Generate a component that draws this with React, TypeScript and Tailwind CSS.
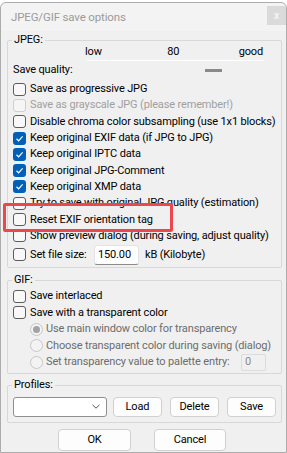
import React from 'react';

type CheckProps = { label: string; checked?: boolean; disabled?: boolean };

function Box({ checked, disabled }: { checked?: boolean; disabled?: boolean }) {
  if (checked) {
    return (
      <span className="flex h-[13px] w-[13px] shrink-0 items-center justify-center rounded-[3px] bg-[#005fb8]">
        <svg width="9" height="9" viewBox="0 0 9 9">
          <path d="M1.5 4.8 L3.6 6.8 L7.6 2.4" fill="none" stroke="#fff" strokeWidth="1.2" />
        </svg>
      </span>
    );
  }
  return (
    <span
      className={`h-[13px] w-[13px] shrink-0 rounded-[3px] border ${
        disabled ? 'border-[#cfcfcf] bg-[#f5f5f5]' : 'border-[#5c5c5c] bg-[#f8f8f8]'
      }`}
    />
  );
}

function Check({ label, checked, disabled }: CheckProps) {
  return (
    <div className="flex h-[16.3px] items-center pl-[5px]">
      <Box checked={checked} disabled={disabled} />
      <span className={`ml-[4px] whitespace-nowrap ${disabled ? 'text-[#a0a0a0]' : 'text-black'}`}>{label}</span>
    </div>
  );
}

function Radio({ label, selected, children }: { label: string; selected?: boolean; children?: React.ReactNode }) {
  return (
    <div className="flex h-[16.5px] items-center pl-[22px]">
      <span className="flex h-[13px] w-[13px] shrink-0 items-center justify-center rounded-full border border-[#c6c6c6] bg-[#f3f3f3]">
        {selected && <span className="h-[7px] w-[7px] rounded-full bg-[#a3a3a3]" />}
      </span>
      <span className="ml-[3px] whitespace-nowrap text-[#6d6d6d]">{label}</span>
      {children}
    </div>
  );
}

function Group({ label, className, children }: { label: string; className: string; children: React.ReactNode }) {
  return (
    <div className={`relative rounded-[2px] border border-[#d8d8d8] ${className}`}>
      <span className="absolute left-[4px] top-[-8px] bg-[#f0f0f0] px-[2px] leading-[14px] text-black">{label}</span>
      {children}
    </div>
  );
}

function Button({ label, className }: { label: string; className: string }) {
  return (
    <div
      className={`flex items-center justify-center rounded-[4px] border border-[#d0d0d0] bg-[#fdfdfd] text-black ${className}`}
    >
      {label}
    </div>
  );
}

export default function App() {
  return (
    <div className="relative h-[453px] w-[287px] overflow-hidden bg-white font-['Roboto',sans-serif] text-[11px] leading-[14px] tracking-[-0.15px]">
      <div className="mt-[2px] flex h-[451px] flex-col rounded-t-[6px] border border-[#acacac] bg-[#f0f0f0]">
        {/* Title bar */}
        <div className="flex h-[28px] items-center rounded-t-[6px] bg-[#f3f3f3] pl-[10px]">
          <span className="flex-1 text-[11.5px] text-[#9b9b9b]">JPEG/GIF save options</span>
          <div className="mt-[-3px] flex h-[19px] w-[19px] items-center justify-center bg-[#dadada] text-[10px] font-bold text-[#f4f4f4]">
            x
          </div>
        </div>

        <div className="pl-[6px] pr-[4px]">
          {/* JPEG */}
          <Group label="JPEG:" className="mt-[9px] h-[228px]">
            <div className="ml-[77px] mt-[4px] flex h-[14px] w-[178px] items-center justify-between text-black">
              <span>low</span>
              <span className="ml-[6px]">80</span>
              <span>good</span>
            </div>
            <div className="ml-[79px] mt-[1px] h-[1px] w-[177px] bg-white" />
            <div className="mt-[2px] flex h-[14px] items-center pl-[5px]">
              <span className="w-[192px] text-black">Save quality:</span>
              <span className="h-[3px] w-[17px] bg-[#8a8a8a]" />
            </div>
            <div className="mt-[4px]">
              <Check label="Save as progressive JPG" />
              <Check label="Save as grayscale JPG (please remember!)" disabled />
              <Check label="Disable chroma color subsampling (use 1x1 blocks)" />
              <Check label="Keep original EXIF data (if JPG to JPG)" checked />
              <Check label="Keep original IPTC data" checked />
              <Check label="Keep original JPG-Comment" checked />
              <Check label="Keep original XMP data" checked />
              <Check label="Try to save with original JPG quality (estimation)" />
              <Check label="Reset EXIF orientation tag" />
              <Check label="Show preview dialog (during saving, adjust quality)" />
            </div>
            <div className="mt-[1px] flex h-[20px] items-center pl-[5px]">
              <Box />
              <span className="ml-[4px] w-[64px] text-black">Set file size:</span>
              <div className="flex h-[20px] w-[45px] items-center rounded-[3px] border border-[#e3e3e3] border-b-[#8a8a8a] bg-white pl-[3px] text-black">
                150.00
              </div>
              <span className="ml-[6px] text-black">kB (Kilobyte)</span>
            </div>
          </Group>

          {/* GIF */}
          <Group label="GIF:" className="mt-[12px] h-[94px]">
            <div className="pt-[7px]">
              <div className="flex h-[16.5px] items-center pl-[5px]">
                <Box />
                <span className="ml-[4px] text-black">Save interlaced</span>
              </div>
              <div className="flex h-[16.5px] items-center pl-[5px]">
                <Box />
                <span className="ml-[4px] text-black">Save with a transparent color</span>
              </div>
              <Radio label="Use main window color for transparency" selected />
              <Radio label="Choose transparent color during saving (dialog)" />
              <Radio label="Set transparency value to palette entry:">
                <div className="ml-auto mr-[15px] flex h-[17px] w-[25px] items-center rounded-[2px] border border-[#dcdcdc] bg-[#f0f0f0] pl-[3px] text-[#8a8a8a]">
                  0
                </div>
              </Radio>
            </div>
          </Group>

          {/* Profiles */}
          <Group label="Profiles:" className="mt-[11px] h-[38px]">
            <div className="mt-[10px] flex h-[21px] items-center pl-[5px]">
              <div className="flex h-[20px] w-[94px] items-center justify-end rounded-[3px] border border-[#8e8e8e] bg-white pr-[6px]">
                <svg width="8" height="5" viewBox="0 0 8 5">
                  <path d="M0.5 0.8 L4 4.2 L7.5 0.8" fill="none" stroke="#555" strokeWidth="1" />
                </svg>
              </div>
              <Button label="Load" className="ml-[6px] h-[20px] w-[49px]" />
              <Button label="Delete" className="ml-[8px] h-[20px] w-[49px]" />
              <Button label="Save" className="ml-[8px] h-[20px] w-[49px]" />
            </div>
          </Group>
        </div>

        {/* Dialog buttons */}
        <div className="mt-[6px] flex pl-[57px]">
          <Button label="OK" className="h-[22px] w-[73px]" />
          <Button label="Cancel" className="ml-[23px] h-[22px] w-[72px]" />
        </div>
      </div>

      {/* Annotation highlight */}
      <div className="absolute left-[3px] top-[203px] h-[29px] w-[170px] rounded-[2px] border-[3px] border-[#ec474c]" />
    </div>
  );
}
